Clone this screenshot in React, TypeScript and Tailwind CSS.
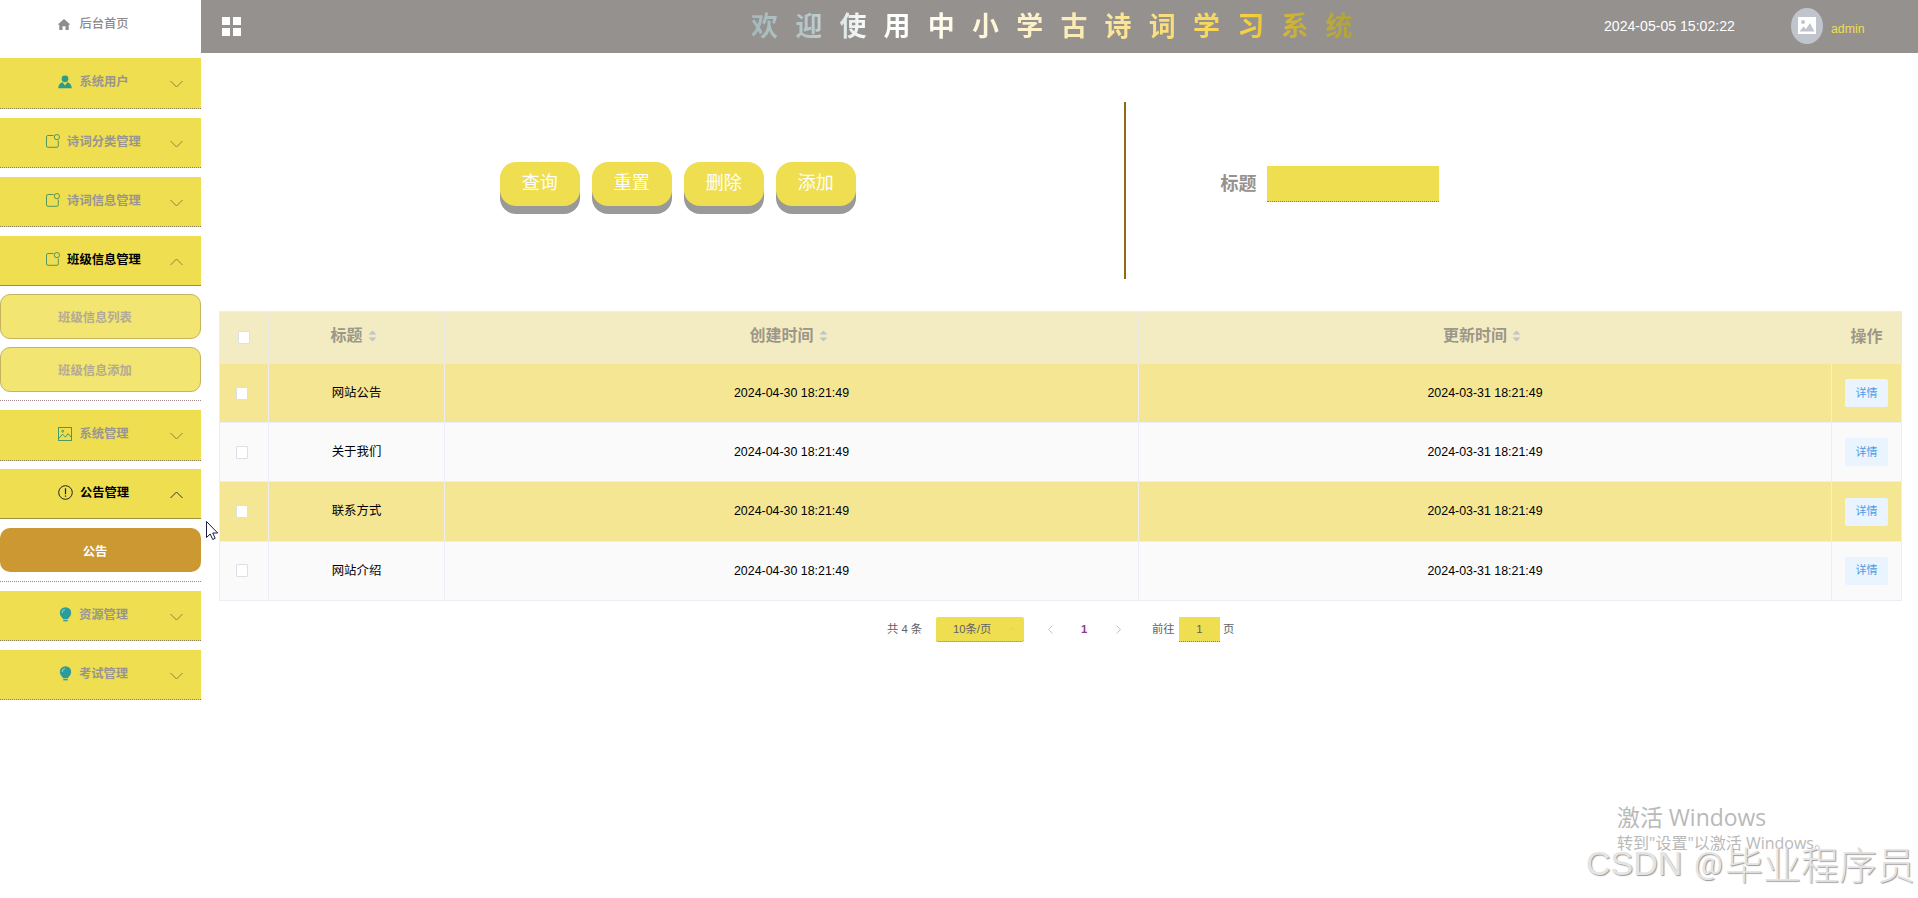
import React from "react";

type IconName = "user" | "message" | "picture" | "warning" | "bulb";

function MenuIcon({ name, dark }: { name: IconName; dark?: boolean }) {
  const stroke = dark ? "#222" : "#55965a";
  if (name === "user")
    return (
      <svg className="h-[14px] w-[14px] shrink-0" viewBox="0 0 14 14" fill="#2b9c8c">
        <circle cx="7" cy="3.8" r="3.4" />
        <path d="M4.600 7.300L7 10.600l2.400-3.300c2.500.8 4.200 2.700 4.400 6H.2c.2-3.300 1.900-5.200 4.400-6z" />
      </svg>
    );
  if (name === "message")
    return (
      <svg className="h-[14px] w-[14px] shrink-0" viewBox="0 0 14 14" fill="none" stroke={stroke}>
        <path d="M7.500 1.500H1.900Q.5 1.500.5 2.900v9Q.5 13.300 1.900 13.300h9q1.400 0 1.400-1.400V6.500" />
        <circle cx="10.900" cy="3.100" r="2.600" />
      </svg>
    );
  if (name === "picture")
    return (
      <svg className="h-[14px] w-[14px] shrink-0" viewBox="0 0 14 14" fill="none" stroke="#4a9a62">
        <rect x=".5" y=".5" width="13" height="13" />
        <path d="M.8 11.500L4.600 7.200l2.900 3L10 6.500l3.400 4" />
        <circle cx="4.700" cy="4.200" r="1" />
      </svg>
    );
  if (name === "warning")
    return (
      <svg className="h-[15px] w-[15px] shrink-0" viewBox="0 0 15 15" fill="none" stroke="#222">
        <circle cx="7.500" cy="7.500" r="6.800" />
        <path d="M7.500 3.300v6M7.500 10.500v1.300" strokeWidth="1.200" />
      </svg>
    );
  return (
    <svg className="h-[15px] w-[13px] shrink-0" viewBox="0 0 13 15">
      <circle cx="6.500" cy="5.900" r="5.700" fill="#2b9c9c" />
      <path d="M2.500 9.500h8L8.800 12.300H4.200z" fill="#2b9c9c" />
      <path d="M4.300 13.700h4.400" stroke="#2b9c9c" strokeWidth="1.300" />
      <path d="M3 6Q3 3 6 2.500" fill="none" stroke="#a8dccb" strokeWidth=".9" />
    </svg>
  );
}

function Chevron({ up, dark }: { up?: boolean; dark?: boolean }) {
  return (
    <svg
      className="absolute top-[22px] left-[170px] h-[8px] w-[13px]"
      viewBox="0 0 13 8"
      fill="none"
      stroke={dark ? "#333" : "#8a8340"}
      strokeWidth="1"
    >
      <path d={up ? "M.5 7L6.500 1l6 6" : "M.5 1l6 6 6-6"} />
    </svg>
  );
}

function MenuItem({
  icon,
  label,
  open,
  darkIcon,
  height,
}: {
  icon: IconName;
  label: string;
  open?: boolean;
  darkIcon?: boolean;
  height: string;
}) {
  return (
    <div
      className={`relative flex w-full items-center justify-center bg-[#eede50] pr-[14px] pb-[3px] ${height} border-b ${
        open ? "border-solid border-[#9a8f3c]" : "border-dotted border-[#8a7f50]"
      }`}
    >
      <MenuIcon name={icon} dark={darkIcon} />
      <span
        className={`ml-[7px] pt-[2px] text-[12.3px] leading-none font-bold ${open ? "text-black" : "text-[#999590]"}`}
      >
        {label}
      </span>
      <Chevron up={open} dark={darkIcon} />
    </div>
  );
}

function SubItem({ label, active, height }: { label: string; active?: boolean; height: string }) {
  return (
    <div
      className={`flex w-full items-center justify-center rounded-[10px] pt-[4px] pr-[11px] text-[12.3px] leading-none font-bold ${height} ${
        active ? "bg-[#cb9831] text-white" : "border border-[#c6b35e] bg-[#f2e571] text-[#b3aa96]"
      }`}
    >
      {label}
    </div>
  );
}

function Dotted() {
  return <div className="h-px w-full border-b border-dotted border-[#a08a90]" />;
}

function Checkbox() {
  return <span className="block h-[13px] w-[12px] rounded-[1px] border border-[#dcdfe6] bg-white" />;
}

function Sort() {
  return (
    <svg className="ml-[5px] h-[12px] w-[9px]" viewBox="0 0 9 12" fill="#c0c4cc">
      <path d="M4.500 .5L8.500 4.500H.5zM4.500 11.500L8.500 7.500H.5z" />
    </svg>
  );
}

const rows = ["网站公告", "关于我们", "联系方式", "网站介绍"];
const buttons = ["查询", "重置", "删除", "添加"];
const grid = "grid grid-cols-[49px_176px_694px_693px_70px]";

export default function App() {
  return (
    <div className="relative flex h-[898px] w-[1918px] overflow-hidden bg-white font-['Liberation_Sans','Noto_Sans_CJK_SC',sans-serif]">
      <aside className="flex w-[201px] shrink-0 flex-col">
        <div className="flex h-[58px] items-center justify-center pr-[14px] pb-[10px] text-[#8f8b8b]">
          <svg className="mt-px h-[11px] w-[12px]" viewBox="0 0 12 11" fill="currentColor">
            <path d="M6 0L0 5.200l.8.8.5-.4V11h3.200V7.300h3V11h3.200V5.600l.5.4.8-.8z" />
          </svg>
          <span className="ml-[9px] text-[12.3px] leading-none font-medium">后台首页</span>
        </div>
        <MenuItem icon="user" label="系统用户" height="h-[51px]" />
        <div className="h-[9px]" />
        <MenuItem icon="message" label="诗词分类管理" height="h-[50px]" />
        <div className="h-[9px]" />
        <MenuItem icon="message" label="诗词信息管理" height="h-[50px]" />
        <div className="h-[9px]" />
        <MenuItem icon="message" label="班级信息管理" open height="h-[50px]" />
        <div className="flex flex-col gap-2 py-2">
          <SubItem label="班级信息列表" height="h-[45px]" />
          <SubItem label="班级信息添加" height="h-[45px]" />
        </div>
        <Dotted />
        <div className="h-[9px]" />
        <MenuItem icon="picture" label="系统管理" height="h-[51px]" />
        <div className="h-2" />
        <MenuItem icon="warning" label="公告管理" open darkIcon height="h-[50px]" />
        <div className="py-[9px]">
          <SubItem label="公告" active height="h-[44px]" />
        </div>
        <Dotted />
        <div className="h-[9px]" />
        <MenuItem icon="bulb" label="资源管理" height="h-[50px]" />
        <div className="h-[9px]" />
        <MenuItem icon="bulb" label="考试管理" height="h-[50px]" />
      </aside>

      <div className="flex min-w-0 flex-1 flex-col">
        <header className="flex h-[53px] shrink-0 items-center bg-[#94918f]">
          <div className="ml-[21px] grid grid-cols-2 gap-[3px]">
            <span className="size-2 bg-white" />
            <span className="size-2 bg-white" />
            <span className="size-2 bg-white" />
            <span className="size-2 bg-white" />
          </div>
          <h1 className="ml-[510px] w-[620px] bg-[linear-gradient(90deg,#a5b9bc_0px,#b6c8c9_60px,#f6f8f8_110px,#ffffff_150px,#fffbe6_200px,#fbecb8_320px,#fbdd75_420px,#f5cf3c_500px,#c9b03a_545px,#b0a33c_600px)] bg-clip-text text-[27px] leading-[40px] font-bold tracking-[17.2px] whitespace-nowrap text-transparent">
            欢迎使用中小学古诗词学习系统
          </h1>
          <span className="ml-[233px] w-[187px] text-[14.1px] whitespace-nowrap text-white">2024-05-05 15:02:22</span>
          <span className="flex h-[36px] w-[32px] -translate-y-px items-center justify-center rounded-[50%] bg-[#c0c4cc]">
            <svg className="h-[17px] w-[18px]" viewBox="0 0 18 17">
              <rect width="18" height="17" fill="#fff" />
              <circle cx="5" cy="5" r="2" fill="#c0c4cc" />
              <path d="M1.500 14.500l4-5 2.500 2.500 4-6 4.500 8.500z" fill="#c0c4cc" />
            </svg>
          </span>
          <span className="mt-[5px] ml-[8px] text-[12.3px] text-[#eede50]">admin</span>
        </header>

        <section className="flex h-[258px] shrink-0 pt-[49px]">
          <div className="ml-[299px] flex gap-[12.5px] pt-[60px]">
            {buttons.map((b) => (
              <button
                key={b}
                className="flex h-[44px] w-[79.500px] items-center justify-center rounded-[16px] bg-[#eede50] pb-[2px] text-[18px] leading-none text-white shadow-[0_8px_0_#999]"
              >
                {b}
              </button>
            ))}
          </div>
          <div className="ml-[268px] h-[177px] w-[2px] bg-[#8f6a14]" />
          <label className="ml-[95px] flex h-[35px] translate-y-[64px] items-center">
            <span className="w-[46px] text-[18px] leading-none font-bold text-[#94918f]">标题</span>
            <input className="h-[36px] w-[172px] border-b border-dotted border-[#8a7f50] bg-[#eede50] outline-none" />
          </label>
        </section>

        <section className="ml-[18px] w-[1683px] border-t border-l border-[#ebeef5] text-[12.4px] text-black">
          <div className={`${grid} h-[52px] bg-[#f3ecc3] text-[16px] font-bold text-[#9c9788] [&>div]:border-r [&>div]:border-b [&>div]:border-[#ebe9e0]`}>
            <div className="flex items-center pl-[18px]">
              <Checkbox />
            </div>
            {["标题", "创建时间", "更新时间"].map((h) => (
              <div key={h} className="flex items-center justify-center pr-[6px] pb-[4px] leading-none">
                {h}
                <Sort />
              </div>
            ))}
            <div className="flex items-center justify-center pb-[2px] leading-none">操作</div>
          </div>
          {rows.map((r, i) => (
            <div
              key={r}
              className={`${grid} ${i === 0 ? "h-[59px]" : "h-[59.400px]"} ${
                i % 2 === 0 ? "bg-[#f4e693]" : "bg-[#fafafa]"
              } [&>div]:flex [&>div]:items-center [&>div]:border-r [&>div]:border-b [&>div]:border-[#ebeef5]`}
            >
              <div className="pl-[16px]">
                <Checkbox />
              </div>
              <div className="justify-center">{r}</div>
              <div className="justify-center">2024-04-30 18:21:49</div>
              <div className="justify-center">2024-03-31 18:21:49</div>
              <div className="justify-center">
                <span className="flex h-[28px] w-[43px] items-center justify-center rounded-[2px] bg-[#e9f4fe] text-[11px] leading-none text-[#4a9be8]">
                  详情
                </span>
              </div>
            </div>
          ))}
        </section>

        <footer className="mt-[16px] ml-[686px] flex h-[25px] items-center text-[11.3px] leading-none text-[#606266]">
          <span className="w-[49px] whitespace-nowrap">共 4 条</span>
          <div className="flex h-[25px] w-[88px] items-center rounded-[2px] border-b border-dotted border-[#8a7f50] bg-[#eede50] pl-[17px]">
            <span className="w-[56px] pt-px">10条/页</span>
            <svg className="h-[4px] w-[7px]" viewBox="0 0 7 4" fill="none" stroke="#d9cf86">
              <path d="M.5 3.500l3-3 3 3" />
            </svg>
          </div>
          <svg className="ml-[24px] h-[9px] w-[5px]" viewBox="0 0 5 9" fill="none" stroke="#c0c4cc">
            <path d="M4.500.5l-4 4 4 4" />
          </svg>
          <span className="ml-[28px] w-[7px] font-bold text-[#8b3f8b]">1</span>
          <svg className="ml-[28px] h-[9px] w-[5px]" viewBox="0 0 5 9" fill="none" stroke="#c0c4cc">
            <path d="M.5.5l4 4-4 4" />
          </svg>
          <span className="ml-[31px] w-[27px]">前往</span>
          <span className="flex h-[25px] w-[41px] items-center justify-center border-b border-dotted border-[#8a7f50] bg-[#eede50]">1</span>
          <span className="ml-[3px]">页</span>
        </footer>
      </div>

      <svg className="absolute top-[520px] left-[205px] h-[21px] w-[14px]" viewBox="0 0 14 21" fill="#fff" stroke="#1c1c3c">
        <path d="M1.500 1.500v16l3.700-3.500 2.500 5.500 2.500-1.200-2.500-5.300h5z" />
      </svg>

      <div className="absolute top-[802px] left-[1617px] font-['Open_Sans','Noto_Sans_CJK_SC',sans-serif] whitespace-nowrap text-[#b9b9b9]">
        <div className="text-[22.900px] leading-[32px]">激活 Windows</div>
        <div className="text-[16px] leading-[18px]">转到"设置"以激活 Windows。</div>
      </div>
      <div className="absolute top-[839px] left-[1586px] flex leading-[48px] whitespace-nowrap text-[#e4e4e4] [text-shadow:1px_1px_1px_#999]">
        <span className="w-[108px] font-['Liberation_Sans'] text-[34px]">CSDN</span>
        <span className="w-[31px] font-[Roboto] text-[32px]">@</span>
        <span className="font-['Noto_Sans_CJK_SC',sans-serif] text-[38px] font-light">毕业程序员</span>
      </div>
    </div>
  );
}
